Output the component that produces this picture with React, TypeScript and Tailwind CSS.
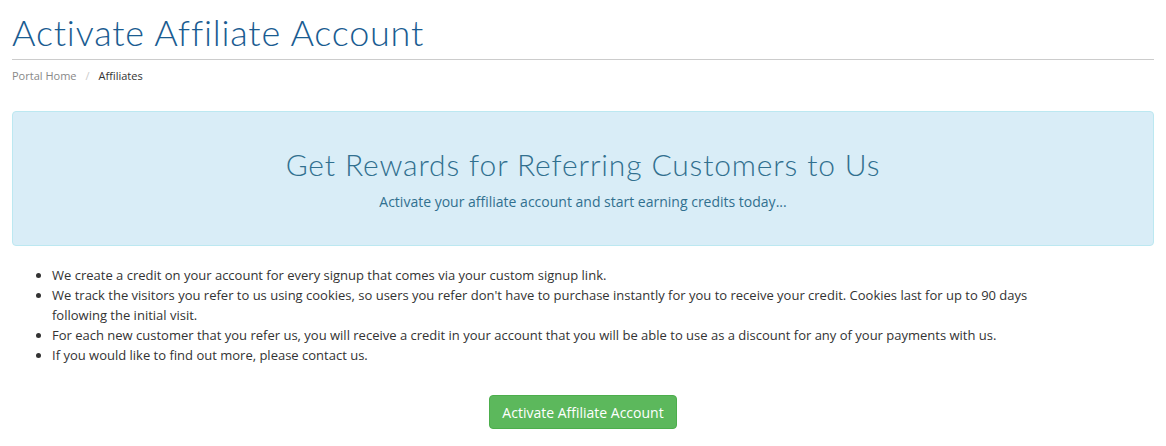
import React from 'react'

const POINTS = [
  'We create a credit on your account for every signup that comes via your custom signup link.',
  "We track the visitors you refer to us using cookies, so users you refer don't have to purchase instantly for you to receive your credit. Cookies last for up to 90 days following the initial visit.",
  'For each new customer that you refer us, you will receive a credit in your account that you will be able to use as a discount for any of your payments with us.',
  'If you would like to find out more, please contact us.',
]

export default function App() {
  return (
    <div className="min-h-screen bg-white px-3 font-['Open_Sans',sans-serif] text-[13px] text-[#333]">
      {/* Header */}
      <h1 className="pt-[12px] pb-[7px] font-['Lato',sans-serif] text-[36px] leading-[40px] font-light tracking-[0.8px] text-[#1a5c91]">
        Activate Affiliate Account
      </h1>
      <div className="border-t border-[#cccccc]" />
      <nav className="flex items-center pt-[8px] text-[11px] leading-[16px]">
        <span className="text-[#888]">Portal Home</span>
        <span className="px-[9px] text-[#ccc]">/</span>
        <span className="text-[#333]">Affiliates</span>
      </nav>

      {/* Alert */}
      <div className="mt-[27px] flex h-[135px] flex-col items-center rounded-[4px] border border-[#bce8f1] bg-[#d9edf7] pt-[32px] text-[#31708f]">
        <h2 className="font-['Lato',sans-serif] text-[30px] leading-[40px] font-light tracking-[0.85px]">
          Get Rewards for Referring Customers to Us
        </h2>
        <p className="mt-[8px] text-[14px] leading-[20px]">
          Activate your affiliate account and start earning credits today...
        </p>
      </div>

      {/* Points */}
      <ul className="mt-[19px] list-disc pl-[40px] pr-[90px] leading-[20px]">
        {POINTS.map((p) => (
          <li key={p}>{p}</li>
        ))}
      </ul>

      <div className="mt-[30px] flex justify-center">
        <button className="h-[34px] rounded-[4px] border border-[#4cae4c] bg-[#5cb85c] px-[12px] text-[14px] text-white">
          Activate Affiliate Account
        </button>
      </div>
    </div>
  )
}
